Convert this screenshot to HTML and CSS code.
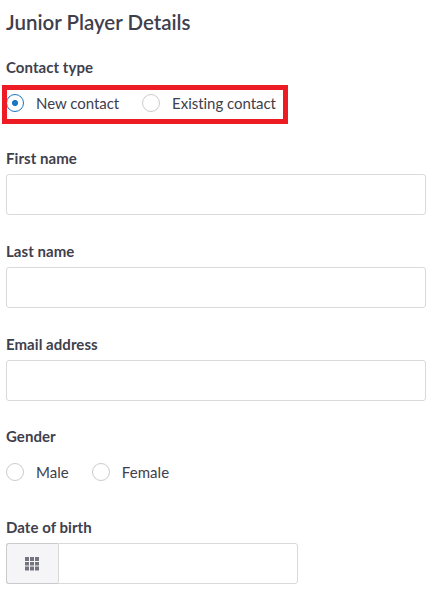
FILE: index.html
```
<!DOCTYPE html>
<html lang="en">
<head>
    <meta charset="UTF-8">
    <meta name="viewport" content="width=device-width, initial-scale=1.0">
    <title>Junior Player Details</title>
    <link rel="stylesheet" href="styles.css">
</head>
<body>
    <form class="form">
        <h1>Junior Player Details</h1>

        <div class="label">Contact type</div>
        <div class="options contact">
            <label class="option"><input type="radio" name="contact" checked>New contact</label>
            <label class="option"><input type="radio" name="contact">Existing contact</label>
        </div>

        <div class="field">
            <label class="label" for="first">First name</label>
            <input class="text" type="text" id="first">
        </div>
        <div class="field">
            <label class="label" for="last">Last name</label>
            <input class="text" type="text" id="last">
        </div>
        <div class="field email">
            <label class="label" for="email">Email address</label>
            <input class="text" type="email" id="email">
        </div>

        <div class="label">Gender</div>
        <div class="options gender">
            <label class="option"><input type="radio" name="gender">Male</label>
            <label class="option"><input type="radio" name="gender">Female</label>
        </div>

        <label class="label" for="dob">Date of birth</label>
        <div class="date">
            <span class="date-icon">
                <svg width="14" height="14" viewBox="0 0 14 14" fill="#74747f">
                    <rect x="0" y="0" width="4" height="4"/>
                    <rect x="5" y="0" width="4" height="4"/>
                    <rect x="10" y="0" width="4" height="4"/>
                    <rect x="0" y="5" width="4" height="3.5"/>
                    <rect x="5" y="5" width="4" height="3.5"/>
                    <rect x="10" y="5" width="4" height="3.5"/>
                    <rect x="0" y="9.5" width="4" height="4"/>
                    <rect x="5" y="9.5" width="4" height="4"/>
                    <rect x="10" y="9.5" width="4" height="4"/>
                </svg>
            </span>
            <input class="text" type="text" id="dob">
        </div>
    </form>
</body>
</html>
```
FILE: styles.css
```
* {
    box-sizing: border-box;
}
body {
    margin: 0;
    background: #fff;
    color: #40404c;
    font-family: Lato, sans-serif;
    font-size: 15px;
    line-height: 20px;
}
.form {
    padding: 8px 12px 0 6px;
}
h1 {
    margin: 0 0 20px;
    font-size: 20.5px;
    line-height: 29px;
    font-weight: 600;
}
.label {
    display: block;
    font-weight: bold;
    letter-spacing: 0.05px;
}
.options {
    display: flex;
    gap: 23px;
}
.option {
    display: flex;
    align-items: center;
}
.option input {
    appearance: none;
    width: 18px;
    height: 18px;
    margin: 0 12px 0 0;
    border: 1px solid #ccc;
    border-radius: 50%;
    background: #fff;
}
.option input:checked {
    border-color: #1a78c2;
    background: radial-gradient(circle, #1a78c2 2.7px, #fff 3.4px);
}
.contact {
    position: relative;
    margin: 16px 0 35px;
    letter-spacing: -0.04px;
}
/* red frame drawn over the contact options */
.contact::after {
    content: "";
    position: absolute;
    top: -8px;
    left: -4px;
    box-sizing: border-box;
    width: 286px;
    height: 39px;
    border: 5px solid #ed1c24;
    pointer-events: none;
}
.field {
    height: 93px;
}
.email {
    height: 92px;
}
.text {
    display: block;
    width: 100%;
    height: 41px;
    margin-top: 6px;
    border: 1px solid #d9d9d9;
    border-radius: 3px;
    outline: none;
}
.gender {
    margin: 16px 0 35px;
    letter-spacing: 0.05px;
}
.date {
    display: flex;
    width: 292px;
    height: 41px;
    margin-top: 6px;
}
.date-icon {
    display: flex;
    flex: none;
    width: 52px;
    padding-right: 1px;
    align-items: center;
    justify-content: center;
    border: 1px solid #c9c9ce;
    border-right: none;
    border-radius: 3px 0 0 3px;
    background: #f5f5f8;
}
.date .text {
    flex: 1;
    min-width: 0;
    margin: 0;
    border-radius: 0 3px 3px 0;
}
```
